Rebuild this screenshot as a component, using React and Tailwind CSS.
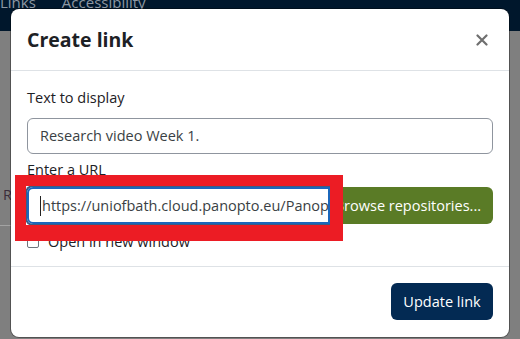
import React from 'react'

const App = () => {
    return (
        <div className="relative w-[520px] h-[339px] overflow-hidden bg-[#7f7f7f] font-['Open_Sans',sans-serif] text-[14.5px]">
            {/* page behind the dialog */}
            <div className="h-[40px] bg-[#00172c] flex text-[15px] text-[#8d97a3] -mt-[9px]">
                <span>Links</span>
                <span className="ml-[26px]">Accessibility</span>
            </div>
            <div className="text-[#3b2d3b] pl-[3px] mt-[153px] leading-[22px]">R</div>
            <div className="border-t border-[#a3a3a3] w-[12px] mt-[19px]"></div>

            {/* dialog */}
            <div className="absolute left-[11px] top-[9px] w-[498px] h-[328px] bg-white rounded-[8px] shadow-[0_0_0_1px_rgba(0,0,0,0.35)] flex flex-col text-[#1d2125]">
                <div className="h-[62px] flex items-center justify-between px-4 border-b border-[#dee2e6] pt-[1px]">
                    <div className="text-[19.5px] font-bold leading-[28px]">Create link</div>
                    <svg width="12" height="12" viewBox="0 0 12 12" className="mr-[5px]">
                        <path d="M1.5 1.5 L10.5 10.5 M10.5 1.5 L1.5 10.5" stroke="#6f6f6f" strokeWidth="2.2" strokeLinecap="round" />
                    </svg>
                </div>
                <div className="px-4 pt-[16px] flex-1">
                    <div className="leading-[22px] text-[#1d2125]">Text to display</div>
                    <div className="mt-[9px] h-[36px] border border-[#8f959e] rounded-[6px] flex items-center px-[12px] text-[#3a3f44]">Research video Week 1.</div>
                    <div className="mt-[5px] leading-[22px]">Enter a URL</div>
                    <div className="mt-[6px] flex items-stretch h-[37px]">
                        <div className="w-[303px] border-[2px] border-[#1b67bb] rounded-l-[6px] shadow-[0_0_0_2px_#3c5c84] flex items-center pl-[11px] text-[#3a3f44] overflow-hidden whitespace-nowrap">
                            <span className="w-[1px] h-[20px] bg-[#222] mr-[1px] shrink-0"></span>
                            https://uniofbath.cloud.panopto.eu/Panopto/Pages/Viewer.aspx
                        </div>
                        <div className="flex-1 bg-[#5a7b26] text-white rounded-r-[6px] flex items-center justify-end pr-[12px] whitespace-nowrap overflow-hidden">Browse repositories...</div>
                    </div>
                    <div className="mt-[7px] flex items-center gap-[9px]">
                        <span className="w-[12px] h-[12px] border border-[#6e747b] rounded-[2px]"></span>
                        <span className="leading-[22px]">Open in new window</span>
                    </div>
                </div>
                <div className="h-[71px] border-t border-[#dee2e6] flex items-center justify-end px-4 pb-[1px]">
                    <div className="h-[37px] w-[102px] justify-center bg-[#032a53] text-white rounded-[6px] flex items-center">Update link</div>
                </div>
            </div>

            {/* red highlight annotation */}
            <div className="absolute left-[15px] top-[175px] w-[328px] h-[66px] border-[#ec1c24] border-t-[11px] border-l-[11px] border-r-[13px] border-b-[16px]"></div>
        </div>
    )
}

export default App
